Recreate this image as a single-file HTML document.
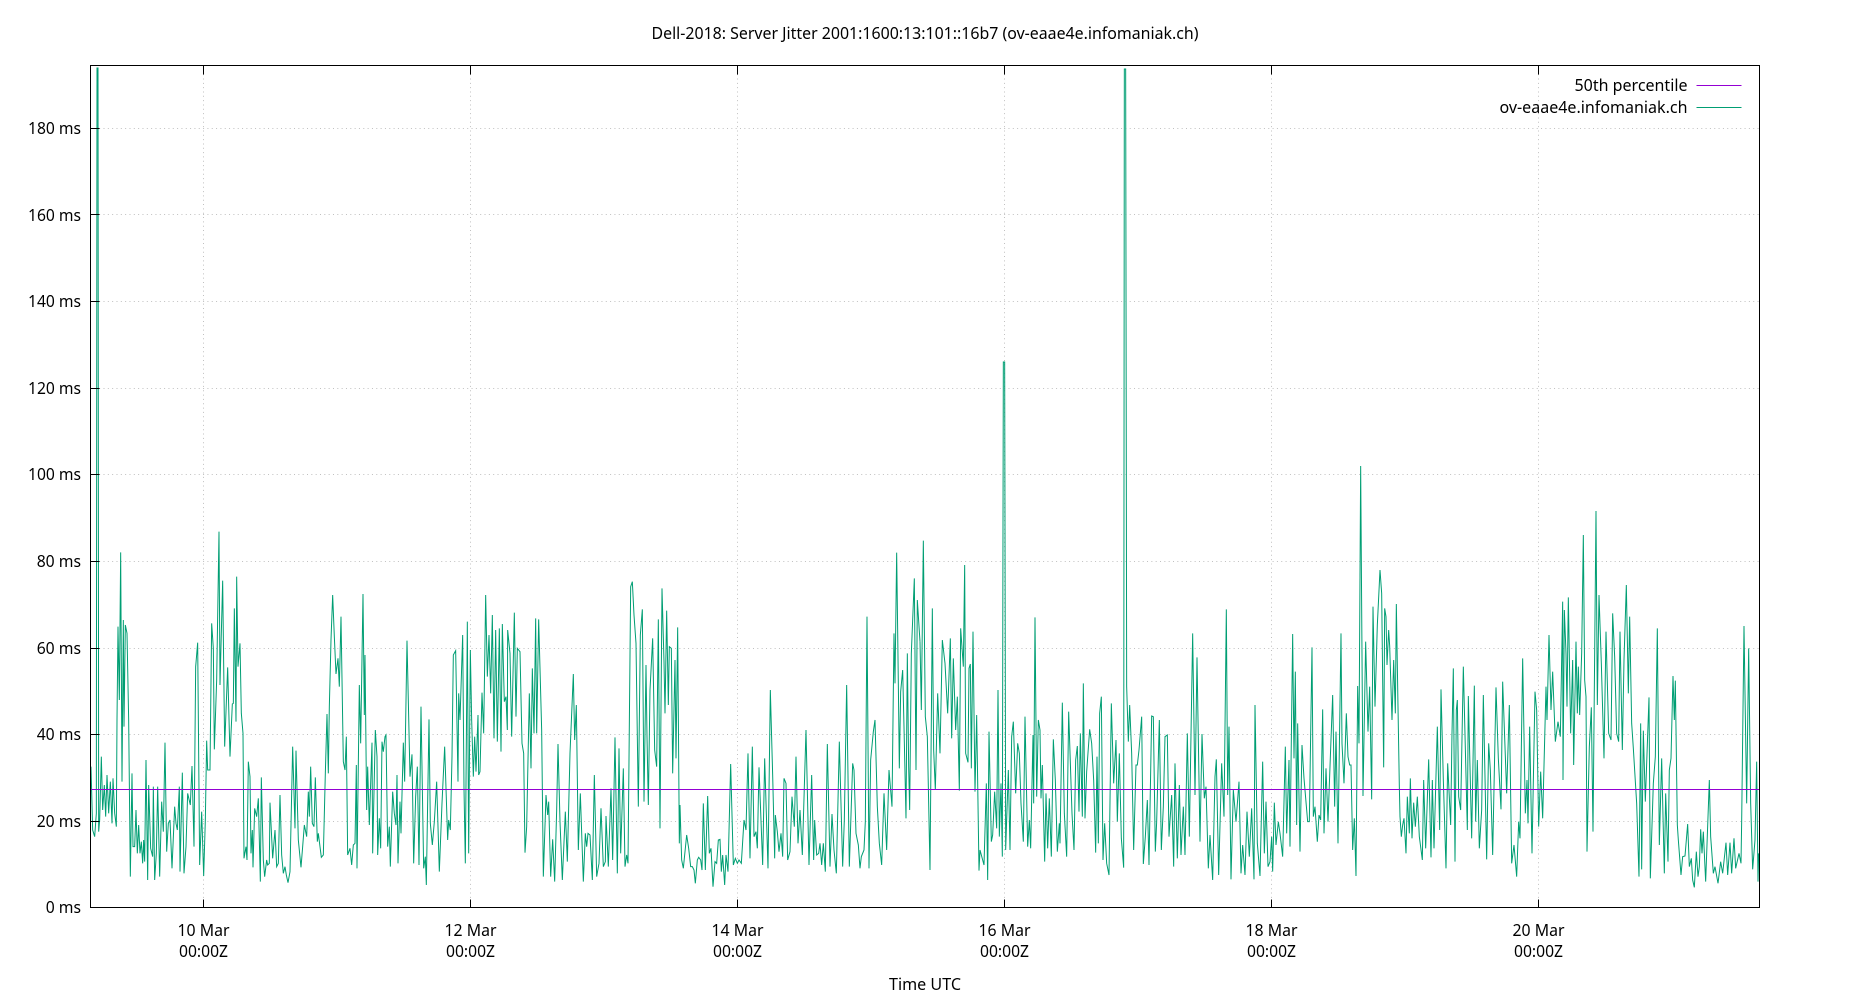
<!DOCTYPE html>
<html>
<head>
<meta charset="utf-8">
<title>Dell-2018: Server Jitter</title>
<style>
html,body{margin:0;padding:0;background:#fff;width:1850px;height:1000px;overflow:hidden}
svg{display:block}
text{font-family:"Noto Sans","DejaVu Sans","Liberation Sans",sans-serif;font-size:16.5px;fill:#000}
.g{stroke:#c0c0c0;stroke-width:1;stroke-dasharray:1 3.33;fill:none}
.d{fill:none;stroke:#009e73;stroke-width:3;stroke-linejoin:miter}
</style>
</head>
<body>
<svg width="1850" height="1000" viewBox="0 0 1850 1000" xmlns="http://www.w3.org/2000/svg">
<rect width="1850" height="1000" fill="#fff"/>
<defs><clipPath id="c"><rect x="90.5" y="65.5" width="1669" height="842"/></clipPath></defs>

<!-- grid -->
<path class="g" d="M90.5 821.5H1759.5M90.5 734.5H1759.5M90.5 648.5H1759.5M90.5 561.5H1759.5M90.5 474.5H1759.5M90.5 388.5H1759.5M90.5 301.5H1759.5M90.5 214.5H1759.5M90.5 128.5H1759.5"/>
<path class="g" d="M203.5 65.5V907.5M470.5 65.5V907.5M737.5 65.5V907.5M1004.5 65.5V907.5M1271.5 65.5V907.5M1538.5 65.5V907.5"/>

<!-- data -->
<g clip-path="url(#c)">
<polyline class="d" transform="translate(0,520) scale(.33333)" points="273,740 278,930 284,950 289,880 291,-1356 294,-1356 296,935 299,900 304,710 308,870 313,795 317,890 321,765 326,880 331,785 336,910 339,775 344,880 349,920 351,600 354,320 358,540 362,97 366,785 370,300 372,620 376,315 381,340 386,600 391,1070 396,760 399,980 404,980 408,870 412,1000 416,915 420,1000 424,965 428,1030 431,960 434,1025 438,720 443,1080 446,795 452,985 458,1010 460,800 464,1080 469,1000 473,800 479,1070 485,845 490,935 495,668 500,995 505,910 510,900 516,1045 524,860 528,910 532,930 538,800 540,1055 547,758 552,1060 558,980 563,820 571,855 576,738 582,980 587,440 593,368 599,1035 605,875 611,1068 616,900 620,662 623,750 630,750 635,310 640,385 643,688 650,480 657,35 660,495 668,182 674,680 683,442 690,710 697,552 700,550 703,265 708,605 710,170 714,440 720,370 724,580 729,640 732,1015 738,980 741,1020 745,725 750,770 753,1000 757,930 759,1042 764,865 770,890 775,835 781,1085 784,772 790,1020 794,1070 800,1020 803,1035 808,1030 810,848 818,1015 825,930 830,1040 835,1030 840,825 845,1005 850,1060 855,1040 859,1065 864,1088 870,1055 878,680 885,925 888,692 895,960 903,1042 908,980 913,915 920,950 925,815 928,890 932,740 937,910 942,920 946,772 952,965 955,940 964,1012 970,1005 976,760 981,582 985,760 988,560 993,360 998,225 1003,350 1008,462 1014,415 1018,500 1023,290 1030,725 1035,750 1039,650 1043,1005 1050,985 1055,1035 1060,975 1065,970 1069,735 1071,1045 1078,495 1082,670 1089,222 1093,585 1095,405 1100,870 1103,740 1108,915 1116,668 1118,1000 1126,630 1131,710 1133,1005 1138,895 1142,985 1146,665 1150,695 1155,650 1158,645 1163,980 1168,920 1171,1040 1178,815 1183,880 1188,915 1191,765 1194,1030 1200,845 1203,940 1210,668 1214,785 1221,362 1230,770 1236,703 1241,1030 1247,830 1252,740 1257,1035 1263,560 1271,1045 1276,1010 1279,1095 1287,598 1291,910 1297,975 1303,905 1310,785 1318,1055 1326,850 1334,680 1343,960 1346,900 1351,930 1356,710 1360,405 1367,392 1374,785 1376,520 1380,600"/>
<polyline class="d" transform="translate(460,520) scale(.33333)" points="0,600 8,345 12,805 16,1030 22,305 26,1000 31,390 35,600 40,770 44,650 48,755 54,585 56,765 60,755 66,518 71,640 77,225 82,470 87,345 92,520 97,285 102,655 107,330 112,665 118,325 123,695 127,312 133,545 138,530 142,630 143,330 150,400 155,650 163,278 168,590 172,385 180,395 186,670 191,700 195,998 200,920 208,520 213,745 217,445 222,640 227,295 230,640 236,298 245,630 250,1070 258,825 263,885 266,845 272,1070 278,958 284,1085 290,870 294,672 300,905 307,1080 316,875 322,1025 330,700 340,462 344,660 349,555 355,990 361,820 370,1085 376,940 380,980 384,940 390,945 397,1080 403,765 410,1070 417,1030 423,865 430,1040 436,1025 438,888 445,1040 453,805 458,1020 465,652 472,1060 477,685 482,1000 490,745 495,1040 500,1005 504,1030 512,200 517,185 522,285 528,370 535,860 541,345 547,268 552,845 558,435 561,650 565,855 570,510 578,355 584,690 590,740 595,298 600,925 606,205 612,425 615,580 620,272 625,555 628,380 634,385 638,760 645,420 648,715 653,322 658,970 660,855 665,1020 670,1045 680,945 686,985 692,1040 697,1040 702,1050 706,1090 712,1020 716,1012 722,1020 726,1050 730,850 736,1050 743,828 748,1000 753,985 759,1100 765,1025 770,1030 775,960 780,958 784,1055 788,1005 794,1095 798,1005 804,1055 812,732 820,1035 826,1015 832,1030 837,1020 844,1030 852,900 858,930 864,700 870,1015 877,680 882,950 888,935 892,985 897,742 908,1035 914,715 924,1045 931,510 938,765 944,1015 946,885 952,935 957,995 963,940 968,1010 972,775 978,790 983,1020 990,995 996,830 1003,920 1008,710 1014,970 1020,870 1027,1005 1038,630 1047,1035 1055,765 1061,1020 1064,900 1070,1005 1076,1000 1080,970 1085,1035 1090,970 1096,1055 1102,672 1110,1040 1116,882 1122,990 1129,1060 1138,665 1148,1040 1153,900 1160,495 1168,1040 1178,730 1182,750 1188,940 1195,975 1200,1045 1204,1010 1212,990 1216,905 1221,290 1227,1045 1232,720 1240,635 1245,600 1252,860 1258,970 1265,1035 1272,820 1280,990 1287,750 1296,860 1302,340 1305,490 1310,98 1315,490 1318,745 1322,515 1328,450 1332,620 1338,895 1342,400 1346,740 1349,870 1354,400 1363,175 1368,750 1372,240 1380,365"/>
<polyline class="d" transform="translate(920,520) scale(.33333)" points="0,365 4,570 10,62 16,590 22,650 30,1050 37,265 41,690 46,810 53,520 60,700 67,360 75,430 83,580 91,355 95,655 100,415 107,630 112,530 118,812 122,325 130,440 134,135 137,700 144,727 147,445 151,432 154,745 159,335 165,815 170,585 177,1052 180,990 192,1035 199,790 203,1080 207,635 214,965 218,945 224,815 230,925 234,510 238,950 243,790 247,1010 250,-474 254,-474 257,990 265,750 270,990 275,650 280,605 287,820 293,670 298,700 303,850 310,965 315,590 323,980 328,900 332,985 339,645 341,850 345,292 350,830 355,600 360,630 363,835 367,735 374,1025 378,820 383,985 388,835 394,1010 400,658 406,780 412,995 418,910 420,970 427,548 433,880 440,1010 446,575 456,880 462,990 467,720 472,678 477,875 481,640 487,890 490,490 495,895 500,755 509,628 515,670 521,780 527,998 531,710 535,970 539,580 544,530 549,1020 554,910 560,1030 567,1065 574,550 581,790 588,660 592,905 598,700 604,955 611,1043 613,-1353 617,-1353 620,500 625,665 629,555 635,700 641,990 648,735 652,735 657,690 665,590 670,1032 676,950 682,840 687,1035 695,588 700,590 706,995 710,905 718,600 724,990 730,860 735,650 742,645 747,950 755,825 761,1040 765,730 772,1015 778,795 783,1005 790,860 795,1005 802,640 808,950 818,340 825,825 831,412 840,965 846,642 853,835 858,800 865,1045 870,945 878,1080 885,770 889,718 896,1065 905,730 912,890 919,268 923,825 927,620 933,1078 940,810 948,905 957,785 963,1060 968,975 975,1065 981,875 988,1010 995,865 1002,1078 1005,555 1012,970 1020,1068 1028,725 1033,1000 1038,845 1044,1040 1050,1025 1055,950 1058,1055 1063,848 1068,975 1075,905 1080,940 1088,1010 1096,680 1100,940 1107,720 1110,980 1118,342 1122,715 1126,455 1130,915 1133,610 1140,995 1146,675 1152,775 1163,905 1168,905 1176,382 1180,890 1185,860 1192,965 1197,885 1202,900 1208,568 1212,940 1218,745 1224,905 1232,685 1238,525 1244,860 1248,635 1254,970 1263,340 1266,670 1272,790 1279,580 1284,710 1289,735 1293,735 1298,990 1303,895 1308,1068 1313,498 1317,670 1322,-162 1329,828 1337,365 1344,635 1349,500 1355,838 1359,260 1365,560 1372,315 1380,150"/>
<polyline class="d" transform="translate(1380,520) scale(.33333)" points="0,150 5,220 11,742 14,265 18,290 21,435 26,330 29,378 36,600 41,420 46,580 49,252 54,560 58,800 60,890 64,950 68,915 72,895 78,1000 82,830 88,940 91,775 96,955 101,848 106,920 112,830 118,950 127,1020 131,780 137,985 146,718 153,1012 157,780 162,985 172,620 179,930 183,508 190,780 198,1045 203,730 212,915 216,640 220,445 225,1025 229,570 232,540 236,830 242,870 250,440 262,930 265,528 275,955 283,497 287,905 292,720 298,985 305,870 310,525 320,1018 326,670 331,750 338,1005 348,502 355,715 363,868 368,485 380,820 388,555 395,1030 402,975 410,1070 416,905 420,955 428,415 436,880 441,780 444,910 449,620 456,1000 465,515 470,570 476,920 482,755 488,895 498,500 501,600 507,345 513,570 518,455 526,665 534,605 541,650 548,245 549,780 553,270 558,400 561,560 565,232 572,640 578,420 581,735 588,365 592,580 595,440 599,585 605,400 610,45 614,480 618,530 621,995 628,680 634,562 639,935 648,-27 652,555 657,225 664,430 672,715 678,335 686,640 693,660 698,280 704,410 710,640 716,665 720,335 727,690 732,420 739,195 745,520 749,290 755,610 760,685 770,850 777,1070 782,610 785,1048 790,632 796,845 807,532 811,1075 820,790 826,710 832,325 838,975 845,715 853,1060 857,820 864,1025 868,750 873,715 879,468 883,600 886,482 892,915 895,960 903,1065 908,1010 915,1008 923,912 928,1040 934,1015 938,1080 943,1102 949,995 954,1070 958,1040 962,928 966,1000 970,935 977,1085 988,780 992,950 1000,1060 1005,1040 1014,1090 1022,1025 1028,1060 1038,968 1043,1065 1050,968 1055,1060 1062,955 1067,1045 1077,1000 1083,1030 1085,905 1092,318 1100,850 1106,385 1112,850 1118,1048 1125,960 1130,725 1134,1085 1136,1000"/>
</g>

<!-- 50th percentile -->
<line x1="90.5" y1="789.5" x2="1759.5" y2="789.5" stroke="#9400d3" stroke-width="1"/>

<!-- ticks -->
<path fill="none" stroke="#000" stroke-width="1" d="M90.5 907.5h9M90.5 821.5h9M90.5 734.5h9M90.5 648.5h9M90.5 561.5h9M90.5 474.5h9M90.5 388.5h9M90.5 301.5h9M90.5 214.5h9M90.5 128.5h9M203.5 907.5v-8M470.5 907.5v-8M737.5 907.5v-8M1004.5 907.5v-8M1271.5 907.5v-8M1538.5 907.5v-8M203.5 65.5v9M470.5 65.5v9M737.5 65.5v9M1004.5 65.5v9M1271.5 65.5v9M1538.5 65.5v9"/>
<!-- border -->
<rect x="90.5" y="65.5" width="1669" height="842" fill="none" stroke="#000" stroke-width="1"/>

<!-- title -->
<text x="925" y="39" text-anchor="middle" textLength="547" lengthAdjust="spacingAndGlyphs">Dell-2018: Server Jitter 2001:1600:13:101::16b7 (ov-eaae4e.infomaniak.ch)</text>

<!-- y labels -->
<g text-anchor="end">
<text x="81" y="134" textLength="53" lengthAdjust="spacingAndGlyphs">180 ms</text>
<text x="81" y="221" textLength="53" lengthAdjust="spacingAndGlyphs">160 ms</text>
<text x="81" y="307" textLength="53" lengthAdjust="spacingAndGlyphs">140 ms</text>
<text x="81" y="394" textLength="53" lengthAdjust="spacingAndGlyphs">120 ms</text>
<text x="81" y="480" textLength="53" lengthAdjust="spacingAndGlyphs">100 ms</text>
<text x="81" y="567" textLength="44.3" lengthAdjust="spacingAndGlyphs">80 ms</text>
<text x="81" y="654" textLength="44.3" lengthAdjust="spacingAndGlyphs">60 ms</text>
<text x="81" y="740" textLength="44.3" lengthAdjust="spacingAndGlyphs">40 ms</text>
<text x="81" y="827" textLength="44.3" lengthAdjust="spacingAndGlyphs">20 ms</text>
<text x="81" y="913" textLength="35.3" lengthAdjust="spacingAndGlyphs">0 ms</text>
</g>

<!-- x labels -->
<g text-anchor="middle">
<text x="203.5" y="936" textLength="52" lengthAdjust="spacingAndGlyphs">10 Mar</text>
<text x="203.5" y="957" textLength="49" lengthAdjust="spacingAndGlyphs">00:00Z</text>
<text x="470.5" y="936" textLength="52" lengthAdjust="spacingAndGlyphs">12 Mar</text>
<text x="470.5" y="957" textLength="49" lengthAdjust="spacingAndGlyphs">00:00Z</text>
<text x="737.5" y="936" textLength="52" lengthAdjust="spacingAndGlyphs">14 Mar</text>
<text x="737.5" y="957" textLength="49" lengthAdjust="spacingAndGlyphs">00:00Z</text>
<text x="1004.5" y="936" textLength="52" lengthAdjust="spacingAndGlyphs">16 Mar</text>
<text x="1004.5" y="957" textLength="49" lengthAdjust="spacingAndGlyphs">00:00Z</text>
<text x="1271.5" y="936" textLength="52" lengthAdjust="spacingAndGlyphs">18 Mar</text>
<text x="1271.5" y="957" textLength="49" lengthAdjust="spacingAndGlyphs">00:00Z</text>
<text x="1538.5" y="936" textLength="52" lengthAdjust="spacingAndGlyphs">20 Mar</text>
<text x="1538.5" y="957" textLength="49" lengthAdjust="spacingAndGlyphs">00:00Z</text>
<text x="925" y="990" textLength="72" lengthAdjust="spacingAndGlyphs">Time UTC</text>
</g>

<!-- legend -->
<text x="1687.5" y="91" text-anchor="end" textLength="113" lengthAdjust="spacingAndGlyphs">50th percentile</text>
<line x1="1696.5" y1="85.5" x2="1741.5" y2="85.5" stroke="#9400d3" stroke-width="1"/>
<text x="1687.5" y="113" text-anchor="end" textLength="188" lengthAdjust="spacingAndGlyphs">ov-eaae4e.infomaniak.ch</text>
<line x1="1696.5" y1="107.5" x2="1741.5" y2="107.5" stroke="#009e73" stroke-width="1"/>
</svg>
</body>
</html>
